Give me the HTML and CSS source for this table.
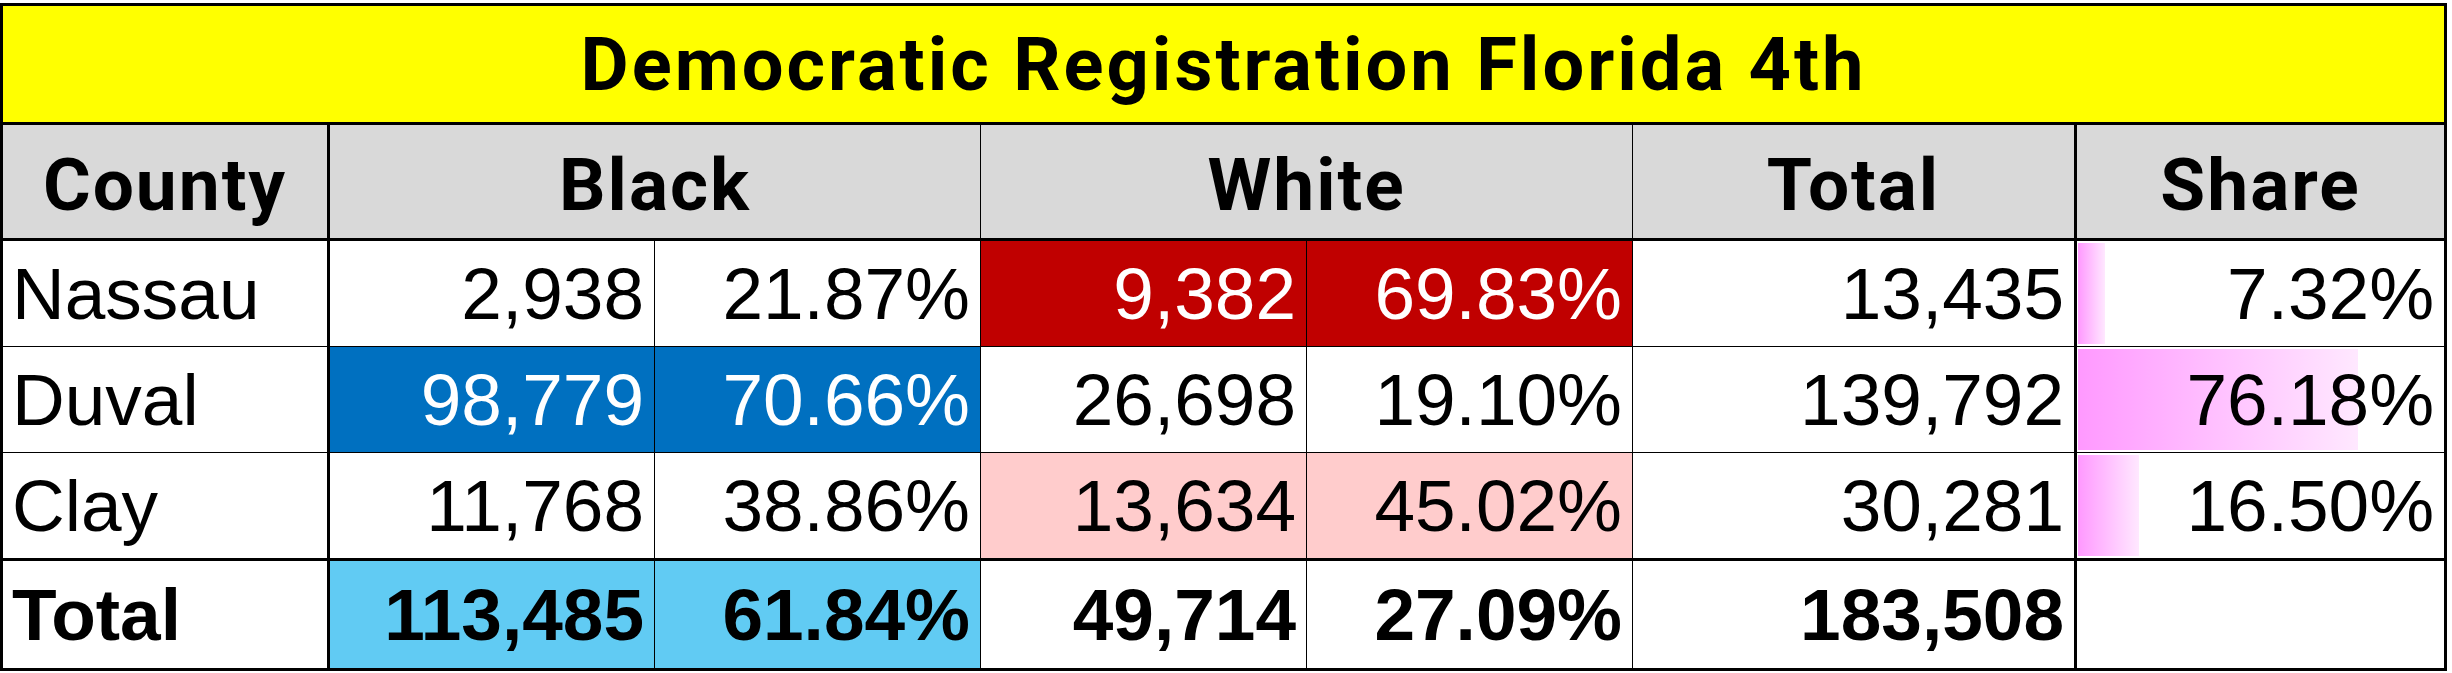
FILE: index.html
```html
<!DOCTYPE html>
<html>
<head>
<meta charset="utf-8">
<link rel="stylesheet" href="styles.css">
</head>
<body>
<table class="sheet">
  <colgroup>
    <col class="c-county">
    <col class="c-num">
    <col class="c-num">
    <col class="c-num">
    <col class="c-num">
    <col class="c-total">
    <col class="c-share">
  </colgroup>
  <tr class="title-row">
    <td colspan="7" class="title">Democratic Registration Florida 4th</td>
  </tr>
  <tr class="head-row">
    <th class="head thick-r">County</th>
    <th class="head" colspan="2">Black</th>
    <th class="head" colspan="2">White</th>
    <th class="head thick-r">Total</th>
    <th class="head">Share</th>
  </tr>
  <tr class="data-row">
    <td class="name thick-r">Nassau</td>
    <td class="num">2,938</td>
    <td class="num">21.87%</td>
    <td class="num red">9,382</td>
    <td class="num red">69.83%</td>
    <td class="num thick-r">13,435</td>
    <td class="num share"><span class="bar" style="width:27px"></span><span class="val">7.32%</span></td>
  </tr>
  <tr class="data-row">
    <td class="name thick-r">Duval</td>
    <td class="num blue">98,779</td>
    <td class="num blue">70.66%</td>
    <td class="num">26,698</td>
    <td class="num">19.10%</td>
    <td class="num thick-r">139,792</td>
    <td class="num share"><span class="bar" style="width:280px"></span><span class="val">76.18%</span></td>
  </tr>
  <tr class="data-row">
    <td class="name thick-r">Clay</td>
    <td class="num">11,768</td>
    <td class="num">38.86%</td>
    <td class="num pink">13,634</td>
    <td class="num pink">45.02%</td>
    <td class="num thick-r">30,281</td>
    <td class="num share"><span class="bar" style="width:61px"></span><span class="val">16.50%</span></td>
  </tr>
  <tr class="total-row">
    <td class="name thick-r">Total</td>
    <td class="num sky">113,485</td>
    <td class="num sky">61.84%</td>
    <td class="num">49,714</td>
    <td class="num">27.09%</td>
    <td class="num thick-r">183,508</td>
    <td class="num"></td>
  </tr>
</table>
</body>
</html>
```

FILE: styles.css
```css
html, body {
  margin: 0;
  padding: 0;
  background: #ffffff;
}
body {
  padding-top: 3px;
}
.sheet {
  border-collapse: collapse;
  table-layout: fixed;
  width: 2447px;
  border: 3px solid #000;
  font-family: "Liberation Sans", Arial, sans-serif;
  color: #000;
}
.c-county { width: 327px; }
.c-num { width: 326px; }
.c-total { width: 443px; }
.c-share { width: 370px; }

.sheet td, .sheet th {
  border: 1px solid #000;
  padding: 0;
  overflow: hidden;
  white-space: nowrap;
}
.title {
  background: #ffff00;
  height: 116px;
  text-align: center;
  font-family: Roboto, "Liberation Sans", sans-serif;
  font-weight: 700;
  font-size: 74px;
  letter-spacing: 3px;
  border-bottom: 3px solid #000 !important;
}
.head-row th {
  height: 107px;
  background: #d9d9d9;
  font-family: Roboto, "Liberation Sans", sans-serif;
  font-weight: 700;
  font-size: 73px;
  letter-spacing: 2px;
  text-align: center;
  padding-top: 6px;
  border-bottom: 3px solid #000;
}
.thick-r {
  border-right: 3px solid #000 !important;
}
.data-row td {
  height: 105px;
  font-size: 73px;
}
.total-row td {
  height: 107px;
  font-size: 73px;
  font-weight: 700;
  border-top: 3px solid #000;
}
.name {
  text-align: left;
  padding-left: 9px !important;
}
.num {
  text-align: right;
  padding-right: 10px !important;
}
.red { background: #c00000; color: #fff; }
.blue { background: #0070c0; color: #fff; }
.pink { background: #ffcccc; }
.sky { background: #61cbf3; }

.share {
  position: relative;
}
.bar {
  position: absolute;
  left: 1px;
  top: 2px;
  bottom: 2px;
  background: linear-gradient(to right, #ff99ff, #ffe8ff);
}
.val {
  position: relative;
}
```
